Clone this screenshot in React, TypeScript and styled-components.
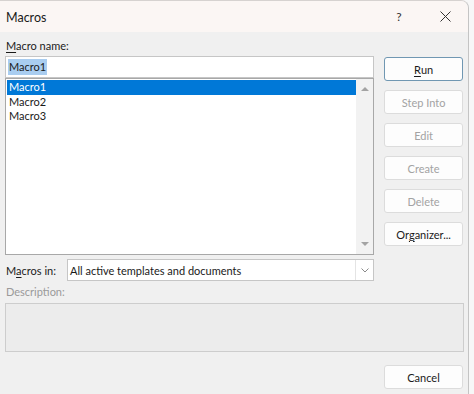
import styled, { createGlobalStyle } from 'styled-components';

const GlobalStyle = createGlobalStyle`
  html, body {
    margin: 0;
    padding: 0;
    background: #f7f7f7;
  }
  body {
    font-family: Lato, "Noto Sans", sans-serif;
    color: #1a1a1a;
  }
`;

const Win = styled.div`
  width: 469px;
  height: 394px;
  box-sizing: border-box;
  overflow: hidden;
  background: #f0f0f0;
  border-top: 1px solid #d6d2d0;
  border-right: 1px solid #c4c4c4;
  border-top-right-radius: 8px;
`;

const TitleBar = styled.div`
  height: 31px;
  display: flex;
  align-items: center;
  background: #fbf6f4;
  padding-left: 6px;
`;

const Title = styled.div`
  flex: 1;
  font-size: 12.5px;
  line-height: 18px;
  margin-top: 2px;
`;

const TitleBtn = styled.div<{ $w: number }>`
  width: ${(p) => p.$w}px;
  height: 31px;
  display: flex;
  align-items: center;
  justify-content: center;
  font-size: 12px;
  color: #333;
`;

const Body = styled.div`
  padding: 6px 5px 0 5px;
`;

const TopRow = styled.div`
  display: flex;
  gap: 10px;
`;

const LeftCol = styled.div`
  width: 370px;
  display: flex;
  flex-direction: column;
`;

const Label = styled.div<{ $muted?: boolean }>`
  font-size: 11px;
  line-height: 16px;
  height: 18px;
  padding-left: 1px;
  color: ${(p) => (p.$muted ? '#9a9a9a' : '#1a1a1a')};
  u {
    text-decoration-thickness: 1px;
    text-underline-offset: 2px;
  }
`;

const TextBox = styled.div`
  height: 22px;
  box-sizing: border-box;
  background: #fff;
  border: 1px solid #c6c6c6;
  display: flex;
  align-items: center;
  padding-left: 2px;
  font-size: 11px;
`;

const Sel = styled.span`
  background: #a9cdf0;
  padding: 0 1px;
  line-height: 16px;
`;

const ListBox = styled.div`
  height: 177px;
  box-sizing: border-box;
  background: #fff;
  border: 1px solid #a8a8a8;
  display: flex;
`;

const Items = styled.div`
  flex: 1;
  padding: 1px 0 0 1px;
`;

const Item = styled.div<{ $sel?: boolean }>`
  height: 14.5px;
  line-height: 14.5px;
  font-size: 11px;
  padding-left: 2px;
  background: ${(p) => (p.$sel ? '#0078d7' : 'transparent')};
  color: ${(p) => (p.$sel ? '#fff' : '#1a1a1a')};
`;

const ScrollBar = styled.div`
  width: 17px;
  background: #f2f2f2;
  display: flex;
  flex-direction: column;
  justify-content: space-between;
  align-items: center;
  padding: 8px 0 8px;
`;

const Arrow = styled.div<{ $down?: boolean }>`
  width: 0;
  height: 0;
  border-left: 4px solid transparent;
  border-right: 4px solid transparent;
  ${(p) =>
    p.$down ? 'border-top: 4px solid #a3a3a3;' : 'border-bottom: 4px solid #a3a3a3;'}
`;

const InRow = styled.div`
  display: flex;
  align-items: center;
  margin-top: 4px;
`;

const InLabel = styled.div`
  width: 61px;
  font-size: 11px;
  padding-left: 1px;
  u {
    text-decoration-thickness: 1px;
    text-underline-offset: 2px;
  }
`;

const Combo = styled.div`
  flex: 1;
  height: 22px;
  box-sizing: border-box;
  background: #fff;
  border: 1px solid #c6c6c6;
  display: flex;
  align-items: center;
  font-size: 11px;
`;

const ComboText = styled.div`
  flex: 1;
  padding-left: 2px;
`;

const ComboBtn = styled.div`
  width: 17px;
  height: 100%;
  border-left: 1px solid #e4e4e4;
  display: flex;
  align-items: center;
  justify-content: center;
`;

const BtnCol = styled.div`
  width: 79px;
  display: flex;
  flex-direction: column;
  gap: 9px;
  padding-top: 19px;
`;

const Button = styled.div<{ $disabled?: boolean; $default?: boolean }>`
  height: 24px;
  box-sizing: border-box;
  border-radius: 3px;
  background: #fdfdfd;
  border: 1px solid ${(p) => (p.$default ? '#7097b2' : '#dcdcdc')};
  display: flex;
  align-items: center;
  justify-content: center;
  font-size: 11px;
  color: ${(p) => (p.$disabled ? '#a3a3a3' : '#1a1a1a')};
  u {
    text-decoration-thickness: 1px;
    text-underline-offset: 2px;
  }
`;

const DescLabel = styled(Label)`
  margin-top: 3px;
`;

const DescBox = styled.div`
  height: 49px;
  margin-top: 1px;
  box-sizing: border-box;
  background: #ececec;
  border: 1px solid #cdcdcd;
  width: 459px;
`;

const Footer = styled.div`
  display: flex;
  justify-content: flex-end;
  margin-top: 13px;
`;

const FooterButton = styled(Button)`
  width: 79px;
`;

export default function App() {
  return (
    <>
      <GlobalStyle />
      <Win>
        <TitleBar>
          <Title>Macros</Title>
          <TitleBtn $w={46}>?</TitleBtn>
          <TitleBtn $w={46}>
            <svg width="11" height="11" viewBox="0 0 11 11">
              <path d="M0.5 0.5 L10.5 10.5 M10.5 0.5 L0.5 10.5" stroke="#333" strokeWidth="1" />
            </svg>
          </TitleBtn>
        </TitleBar>
        <Body>
          <TopRow>
            <LeftCol>
              <Label>
                <u>M</u>acro name:
              </Label>
              <TextBox>
                <Sel>Macro1</Sel>
              </TextBox>
              <ListBox>
                <Items>
                  <Item $sel>Macro1</Item>
                  <Item>Macro2</Item>
                  <Item>Macro3</Item>
                </Items>
                <ScrollBar>
                  <Arrow />
                  <Arrow $down />
                </ScrollBar>
              </ListBox>
              <InRow>
                <InLabel>
                  M<u>a</u>cros in:
                </InLabel>
                <Combo>
                  <ComboText>All active templates and documents</ComboText>
                  <ComboBtn>
                    <svg width="8" height="5" viewBox="0 0 8 5">
                      <path d="M0.5 0.5 L4 4 L7.5 0.5" fill="none" stroke="#8a8a8a" strokeWidth="1" />
                    </svg>
                  </ComboBtn>
                </Combo>
              </InRow>
            </LeftCol>
            <BtnCol>
              <Button $default>
                <u>R</u>un
              </Button>
              <Button $disabled>Step Into</Button>
              <Button $disabled>Edit</Button>
              <Button $disabled>Create</Button>
              <Button $disabled>Delete</Button>
              <Button>
                Or<u>g</u>anizer...
              </Button>
            </BtnCol>
          </TopRow>
          <DescLabel $muted>Description:</DescLabel>
          <DescBox />
          <Footer>
            <FooterButton>Cancel</FooterButton>
          </Footer>
        </Body>
      </Win>
    </>
  );
}
